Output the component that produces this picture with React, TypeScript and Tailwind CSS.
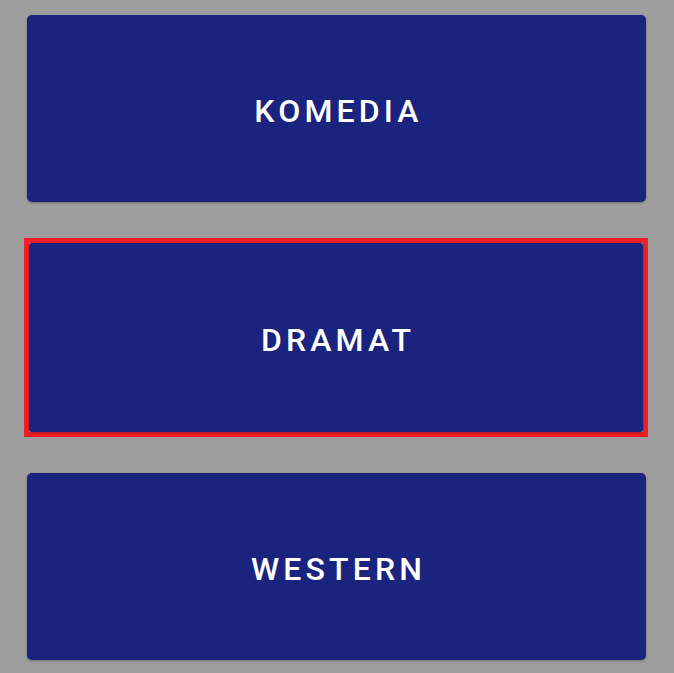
const genres = ["KOMEDIA", "DRAMAT", "WESTERN"];
const selected = "DRAMAT";

function GenreCard({ label, active }: { label: string; active: boolean }) {
  const text = (
    <span className="text-white text-[32px] font-medium tracking-[0.13em] leading-none pl-[4px] pt-[5px]">{label}</span>
  );
  if (active) {
    return (
      <div className="ml-[24px] w-[624px] h-[199px] border-[5px] border-[#f21d25]">
        <div className="w-full h-full rounded-[3px] bg-[#1a237e] flex items-center justify-center shadow-[0_1px_3px_rgba(0,0,0,0.3)]">
          {text}
        </div>
      </div>
    );
  }
  return (
    <div className="ml-[27px] w-[619px] h-[187px] rounded-[5px] bg-[#1a237e] flex items-center justify-center shadow-[0_1px_3px_rgba(0,0,0,0.3)]">
      {text}
    </div>
  );
}

export default function App() {
  return (
    <div className="w-[674px] h-[673px] bg-[#9e9e9e] pt-[15px] flex flex-col gap-[36px] overflow-hidden" style={{ fontFamily: "Roboto, 'Liberation Sans', sans-serif" }}>
      {genres.map((g) => (
        <GenreCard key={g} label={g} active={g === selected} />
      ))}
    </div>
  );
}
